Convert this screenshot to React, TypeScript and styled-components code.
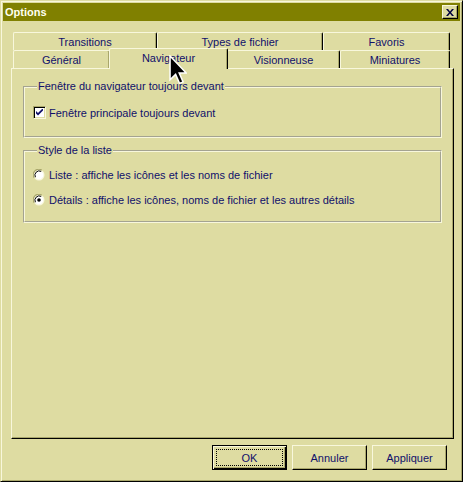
import React from "react";
import styled, { createGlobalStyle } from "styled-components";

const FACE = "#dedca2";
const HILITE = "#f8f7dc";
const SHADOW = "#a9a76b";
const DARK = "#000000";
const TEXT = "#10106a";

const Global = createGlobalStyle`
  html, body { margin: 0; padding: 0; background: ${FACE}; }
  body { font-family: "Liberation Sans", Arial, sans-serif; font-size: 11px; color: ${TEXT}; }
  * { box-sizing: border-box; }
`;

const Window = styled.div`
  position: relative;
  width: 463px;
  height: 482px;
  display: flex;
  flex-direction: column;
  background: ${FACE};
  border: 1px solid;
  border-color: ${FACE} ${DARK} ${DARK} ${FACE};
  box-shadow: inset 1px 1px ${HILITE}, inset -1px -1px ${SHADOW};
  padding: 2px;
`;

const TitleBar = styled.div`
  height: 18px;
  background: #808000;
  display: flex;
  align-items: center;
  justify-content: space-between;
  padding: 0 2px 0 2px;
`;

const TitleText = styled.span`
  color: #fffff0;
  font-weight: bold;
  font-size: 11px;
`;

const CloseButton = styled.div`
  width: 16px;
  height: 14px;
  background: ${FACE};
  border: 1px solid;
  border-color: ${HILITE} ${DARK} ${DARK} ${HILITE};
  box-shadow: inset -1px -1px ${SHADOW};
  display: flex;
  align-items: center;
  justify-content: center;
`;

const Body = styled.div`
  flex: 1;
  display: flex;
  flex-direction: column;
  padding: 11px 6px 9px 8px;
`;

const TabRow = styled.div`
  display: flex;
  align-items: flex-end;
  height: 18px;
  padding-left: 2px;
`;

const Tab = styled.div<{ $w: number; $selected?: boolean }>`
  position: relative;
  z-index: ${(p) => (p.$selected ? 2 : 1)};
  width: ${(p) => p.$w + (p.$selected ? 2 : 0)}px;
  height: ${(p) => (p.$selected ? 21 : 18)}px;
  margin-left: ${(p) => (p.$selected ? -1 : 0)}px;
  margin-right: ${(p) => (p.$selected ? -1 : 0)}px;
  margin-bottom: ${(p) => (p.$selected ? -1 : 0)}px;
  background: ${FACE};
  border-top: 1px solid ${HILITE};
  border-left: 1px solid ${HILITE};
  border-right: 1px solid ${DARK};
  border-top-left-radius: 2px;
  border-top-right-radius: 2px;
  box-shadow: inset -1px 0 ${SHADOW};
  display: flex;
  justify-content: center;
  padding-top: 3px;
  line-height: 13px;
  white-space: nowrap;
`;

const Panel = styled.div`
  flex: 1;
  display: flex;
  flex-direction: column;
  gap: 6px;
  background: ${FACE};
  border: 1px solid;
  border-color: ${HILITE} ${DARK} ${DARK} ${HILITE};
  box-shadow: inset -1px -1px ${SHADOW};
  padding: 11px 11px 0 11px;
`;

const Group = styled.fieldset<{ $pb: number }>`
  margin: 0;
  padding: 0 8px ${(p) => p.$pb}px 8px;
  border: 2px groove ${HILITE};
  display: flex;
  flex-direction: column;
  min-width: 0;
`;

const Legend = styled.legend`
  padding: 0 1px;
  margin-left: 4px;
  line-height: 13px;
  color: ${TEXT};
`;

const OptionRow = styled.label<{ $mt?: number }>`
  display: flex;
  align-items: center;
  height: 25px;
  gap: 3px;
  margin-top: ${(p) => p.$mt ?? 0}px;
  color: ${TEXT};
`;

const CheckBox = styled.span`
  width: 13px;
  height: 13px;
  background: #ffffff;
  border: 1px solid;
  border-color: ${SHADOW} ${HILITE} ${HILITE} ${SHADOW};
  box-shadow: inset 1px 1px ${DARK}, inset -1px -1px ${FACE};
  display: flex;
  align-items: center;
  justify-content: center;
`;

const Radio = styled.span`
  width: 12px;
  height: 12px;
  display: inline-flex;
  margin-right: 1px;
`;

const ButtonRow = styled.div`
  display: flex;
  justify-content: flex-end;
  gap: 5px;
  padding: 6px 7px 0 0;
`;

const Button = styled.div<{ $default?: boolean }>`
  width: 75px;
  height: 25px;
  background: ${FACE};
  border: 1px solid;
  border-color: ${(p) => (p.$default ? DARK : HILITE)} ${DARK} ${DARK} ${(p) => (p.$default ? DARK : HILITE)};
  box-shadow: ${(p) =>
    p.$default
      ? `inset 1px 1px ${HILITE}, inset -1px -1px ${DARK}, inset -2px -2px ${SHADOW}`
      : `inset -1px -1px ${SHADOW}`};
  display: flex;
  align-items: center;
  justify-content: center;
  padding: 3px;
  color: ${TEXT};
`;

const FocusRect = styled.span`
  flex: 1;
  align-self: stretch;
  display: flex;
  align-items: center;
  justify-content: center;
  border: 1px dotted #000;
`;

const Cursor = styled.svg`
  position: absolute;
  z-index: 10;
  left: 168px;
  top: 54px;
`;

const backRow = [
  { label: "Transitions", w: 144 },
  { label: "Types de fichier", w: 166 },
  { label: "Favoris", w: 127 },
];
const frontRow = [
  { label: "Général", w: 97 },
  { label: "Navigateur", w: 117, selected: true },
  { label: "Visionneuse", w: 113 },
  { label: "Miniatures", w: 110 },
];

const RadioIcon = ({ checked }: { checked?: boolean }) => (
  <svg width="12" height="12" viewBox="0 0 12 12">
    <circle cx="6" cy="6" r="5.5" fill={HILITE} />
    <path d="M1.2 8.8 A5.5 5.5 0 0 1 8.8 1.2" stroke={SHADOW} strokeWidth="1.2" fill="none" />
    <circle cx="6" cy="6" r="4.3" fill="#ffffff" />
    <path d="M2.4 8.2 A4.3 4.3 0 0 1 8.2 2.4" stroke={DARK} strokeWidth="1" fill="none" />
    {checked && <circle cx="6" cy="6" r="1.8" fill={DARK} />}
  </svg>
);

export default function App() {
  return (
    <>
      <Global />
      <Window>
        <TitleBar>
          <TitleText>Options</TitleText>
          <CloseButton>
            <svg width="8" height="7" viewBox="0 0 8 7">
              <path d="M0 0 L2 0 L4 2.5 L6 0 L8 0 L5 3.5 L8 7 L6 7 L4 4.5 L2 7 L0 7 L3 3.5 Z" fill="#000040" />
            </svg>
          </CloseButton>
        </TitleBar>
        <Body>
          <TabRow>
            {backRow.map((t) => (
              <Tab key={t.label} $w={t.w}>
                {t.label}
              </Tab>
            ))}
          </TabRow>
          <TabRow>
            {frontRow.map((t) => (
              <Tab key={t.label} $w={t.w} $selected={t.selected}>
                {t.label}
              </Tab>
            ))}
          </TabRow>
          <Panel>
            <Group $pb={11}>
              <Legend>Fenêtre du navigateur toujours devant</Legend>
              <OptionRow $mt={7}>
                <CheckBox>
                  <svg width="7" height="7" viewBox="0 0 7 7">
                    <path d="M0 2 L0 4.5 L2 6.5 L7 1.5 L7 -1 L2 4 Z" fill={TEXT} />
                  </svg>
                </CheckBox>
                Fenêtre principale toujours devant
              </OptionRow>
            </Group>
            <Group $pb={9}>
              <Legend>Style de la liste</Legend>
              <OptionRow $mt={5}>
                <Radio>
                  <RadioIcon />
                </Radio>
                Liste : affiche les icônes et les noms de fichier
              </OptionRow>
              <OptionRow>
                <Radio>
                  <RadioIcon checked />
                </Radio>
                Détails : affiche les icônes, noms de fichier et les autres détails
              </OptionRow>
            </Group>
          </Panel>
          <ButtonRow>
            <Button $default>
              <FocusRect>OK</FocusRect>
            </Button>
            <Button>Annuler</Button>
            <Button>Appliquer</Button>
          </ButtonRow>
        </Body>
        <Cursor width="18" height="30" viewBox="0 0 12 20">
          <path
            d="M0.7 0.7 L0.7 16.5 L4.4 12.9 L7 18.9 L9.4 17.9 L6.8 12 L11.5 12 Z"
            fill="#000000"
            stroke="#ffffff"
            strokeWidth="1"
            strokeLinejoin="miter"
          />
        </Cursor>
      </Window>
    </>
  );
}
